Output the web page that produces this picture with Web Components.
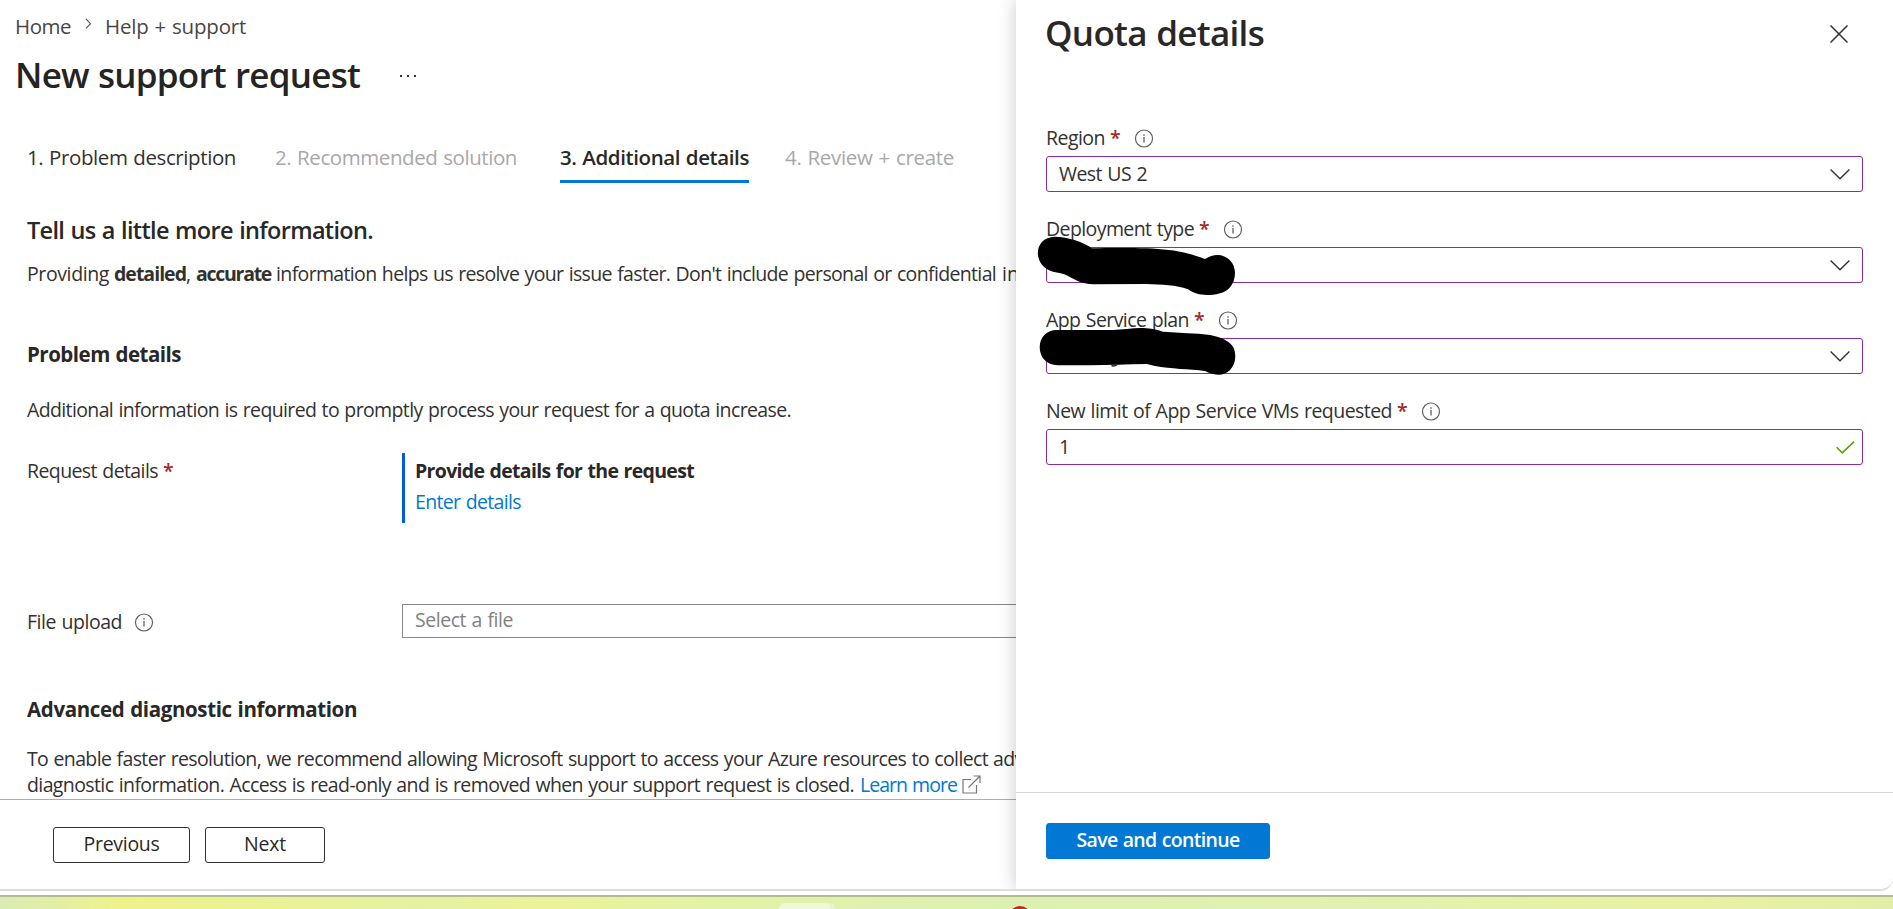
<!DOCTYPE html>
<html lang="en">
<head>
<meta charset="utf-8">
<title>New support request</title>
<style>
  html, body {
    margin: 0;
    height: 909px;
    overflow: hidden;
    background: #fff;
    --text-color: #323130;
    --link-color: #0078d4;
    --field-color: #8a2da5;
  }

  body {
    font-family: "Open Sans", "Noto Sans", sans-serif;
    font-size: 19.5px;
    line-height: 26px;
    word-spacing: 0.9px;
    color: var(--text-color);
  }
</style>
</head>
<body>
<support-app></support-app>

<script>
const define = (name, html, setup) => {
  const template = document.createElement('template');
  template.innerHTML = html;

  customElements.define(name, class extends HTMLElement {
    constructor() {
      super();
      this.attachShadow({mode: 'open'});
      this.shadowRoot.appendChild(template.content.cloneNode(true));
    }

    connectedCallback() {
      if (setup) {
        setup(this, this.shadowRoot);
      }
    }
  });
};

// One line of text, tracked so that it fills the given width.
define('fit-text', `
<style>
  :host { display: inline-block; white-space: nowrap; }
  span { display: inline-block; }
</style>
<span><slot></slot></span>`, (host, root) => {
  const span = root.querySelector('span');
  const width = Number(host.getAttribute('w'));
  const count = host.textContent.length;
  const gap = (width - span.getBoundingClientRect().width) / count;
  host.style.letterSpacing = gap.toFixed(3) + 'px';
});

define('info-icon', `
<style>
  :host { display: block; width: 20px; height: 20px; }
  svg { display: block; }
</style>
<svg width="20" height="20" fill="none" stroke="#605e5c">
  <circle cx="10" cy="9.5" r="8.5" stroke-width="1.2"/>
  <path d="M10 8v5.500M10 5.300v1.500" stroke-width="1.3"/>
</svg>`);

define('bread-crumb', `
<style>
  :host { display: flex; height: 26px; padding: 13px 0 0 15px; color: #484644; font-size: 20.5px; }
  svg { margin: 5px 13px 0 14px; }
</style>
<fit-text w="56">Home</fit-text>
<svg width="7" height="12" fill="none" stroke="#605e5c" stroke-width="1.2"><path d="M1 1l4.500 4.700L1 10.400"/></svg>
<fit-text w="141">Help + support</fit-text>`);

define('page-title', `
<style>
  :host { display: flex; height: 50px; margin-top: 11px; padding-left: 15px; }
  h1 { margin: 0; font-size: 35px; line-height: 50px; font-weight: 600; color: #252423; }
  svg { margin: 24px 0 0 40px; }
</style>
<h1><fit-text w="345">New support request</fit-text></h1>
<svg width="18" height="4" fill="#323130"><path d="M0 1h2v2H0zM7 1h2v2H7zM14 1h2v2h-2z"/></svg>`);

define('step-tab', `
<style>
  :host { display: block; box-sizing: border-box; height: 45px; padding-top: 6px; font-size: 20.5px; color: #323130; }
  :host([disabled]) { color: #a9a8a7; }
  :host([active]) { font-weight: 600; color: #292827; border-bottom: 3px solid #0078d4; }
</style>
<slot></slot>`);

define('step-tabs', `
<style>
  :host { display: flex; margin: 38px 0 0 27px; height: 45px; }
  step-tab[disabled] { margin-left: 39px; }
  step-tab[active] { margin-left: 43px; }
  step-tab[active] + step-tab { margin-left: 36px; }
</style>
<step-tab><fit-text w="209">1. Problem description</fit-text></step-tab>
<step-tab disabled><fit-text w="242">2. Recommended solution</fit-text></step-tab>
<step-tab active><fit-text w="189">3. Additional details</fit-text></step-tab>
<step-tab disabled><fit-text w="169">4. Review + create</fit-text></step-tab>`);

define('form-row', `
<style>
  :host { display: grid; grid-template-columns: 375px 640px; }
  .label { display: flex; }
</style>
<div class="label"><slot name="label"></slot></div>
<slot></slot>`);

define('request-form', `
<style>
  :host { display: block; height: 616px; overflow: hidden; padding-left: 27px; white-space: nowrap; }
  h2, h3, p { margin: 0; color: #292827; }
  h2 { margin-top: 34px; font-size: 23.5px; line-height: 26px; font-weight: 600; }
  h3 { font-size: 20.5px; line-height: 26px; font-weight: 700; }
  p { color: var(--text-color); }
  b { font-weight: 700; }
  a { color: var(--link-color); }
  .intro { display: flex; margin-top: 18px; }
  .star { margin-left: 5px; font-weight: 600; color: #a4262c; }
  .details { border-left: 3px solid #015cda; height: 70px; padding-left: 10px; }
  .details b { display: block; margin-top: 5px; color: #292827; }
  .details a { display: block; margin-top: 5px; }
  .file { box-sizing: border-box; height: 34px; border: 1px solid #8a8886; padding: 2px 12px; line-height: 26px; color: #838180; }
  info-icon { margin: 4px 0 0 12px; }
  svg { display: inline-block; margin-left: 5px; vertical-align: -2px; }
</style>
<h2><fit-text w="346">Tell us a little more information.</fit-text></h2>
<p class="intro">
  <fit-text w="82">Providing</fit-text>
  <b style="margin-left:5px"><fit-text w="72">detailed</fit-text></b>,
  <b style="margin-left:5px"><fit-text w="75">accurate</fit-text></b>
  <fit-text w="720" style="margin-left:5px">information helps us resolve your issue faster. Don't include personal or confidential</fit-text>&nbsp;information
</p>
<h3 style="margin-top:54px"><fit-text w="154">Problem details</fit-text></h3>
<p style="margin-top:30px"><fit-text w="764">Additional information is required to promptly process your request for a quota increase.</fit-text></p>
<form-row style="margin-top:30px">
  <div slot="label" style="padding-top:5px"><fit-text w="131">Request details</fit-text><span class="star">*</span></div>
  <div class="details">
    <b><fit-text w="279">Provide details for the request</fit-text></b>
    <a><fit-text w="106">Enter details</fit-text></a>
  </div>
</form-row>
<form-row style="margin-top:81px">
  <div slot="label" style="display:flex;padding-top:5px"><fit-text w="95">File upload</fit-text><info-icon></info-icon></div>
  <div class="file"><fit-text w="98">Select a file</fit-text></div>
</form-row>
<h3 style="margin-top:58px"><fit-text w="330">Advanced diagnostic information</fit-text></h3>
<p style="margin-top:24px"><fit-text w="961">To enable faster resolution, we recommend allowing Microsoft support to access your Azure resources to collect</fit-text><fit-text w="82" style="margin-left:5px">advanced</fit-text></p>
<p><fit-text w="827">diagnostic information. Access is read-only and is removed when your support request is closed.</fit-text>&nbsp;<a><fit-text w="97">Learn more</fit-text></a><svg width="19" height="19" fill="none" stroke="#797775" stroke-width="1.200"><path d="M9 4.5H1v13.500h13.500v-8M6.500 12.500L17.500 1.500M11.500 1H18V8"/></svg></p>`);

define('ui-button', `
<style>
  :host {
    box-sizing: border-box; display: flex; justify-content: center; height: 36px;
    border: 1px solid #323130; border-radius: 3px; line-height: 32px;
    font-weight: 500; color: #292827; background: #fff;
  }
  :host([primary]) { border-color: #0078d4; background: #0078d4; color: #fff; font-weight: 600; }
</style>
<slot></slot>`);

define('request-page', `
<style>
  :host { display: block; width: 1016px; height: 889px; overflow: hidden; }
  footer { display: flex; height: 89px; gap: 15px; padding: 27px 0 0 53px; border-top: 1px solid #adadad; }
</style>
<bread-crumb></bread-crumb>
<page-title></page-title>
<step-tabs></step-tabs>
<request-form></request-form>
<footer>
  <ui-button style="width:137px"><fit-text w="76">Previous</fit-text></ui-button>
  <ui-button style="width:120px"><fit-text w="42">Next</fit-text></ui-button>
</footer>`);

define('quota-field', `
<style>
  :host { display: flow-root; height: 91px; }
  .label { display: flex; height: 31px; margin-top: -1px; line-height: 26px; }
  .star { margin-left: 5px; width: 10px; font-weight: 600; color: #a4262c; }
  info-icon { margin: 4px 0 0 14px; }
  .box {
    box-sizing: border-box; display: flex; justify-content: space-between; height: 36px;
    border: 1px solid var(--field-color); border-radius: 3px; padding: 4px 12px 0 12px; background: #fff;
  }
  svg { display: none; }
  .arrow { margin-top: 8px; }
  .check { margin: 7px -5px 0 0; }
  :host([kind="select"]) .arrow, :host([kind="valid"]) .check { display: block; }
</style>
<div class="label"><slot name="label"></slot><span class="star">*</span><info-icon></info-icon></div>
<div class="box">
  <slot><span></span></slot>
  <svg class="arrow" width="20" height="11" fill="none" stroke="#323130" stroke-width="1.4"><path d="M.6.6L10 9.800 19.400.6"/></svg>
  <svg class="check" width="19" height="13" fill="none" stroke="#57a300" stroke-width="1.6"><path d="M.6 6.200L6.300 11.800 18 .6"/></svg>
</div>`);

define('quota-panel', `
<style>
  :host {
    box-sizing: border-box; display: flex; flex-direction: column; width: 877px; height: 889px;
    background: #fff; border-radius: 0 0 12px 0; box-shadow: 0 0 18px rgba(0, 0, 0, .22);
  }
  header { display: flex; justify-content: space-between; height: 126px; padding: 0 45px 0 29px; }
  h1 { margin: 8px 0 0; font-size: 35px; line-height: 50px; font-weight: 600; color: #292827; }
  header svg { margin-top: 25px; }
  main { flex: 1; padding: 0 30px; }
  .form { position: relative; display: flow-root; }
  .marks { position: absolute; left: -14px; top: 106px; }
  footer { box-sizing: border-box; height: 97px; border-top: 1px solid #d8d8d8; padding: 30px; }
</style>
<header>
  <h1><fit-text w="219">Quota details</fit-text></h1>
  <svg width="18" height="18" fill="none" stroke="#323130" stroke-width="1.5"><path d="M.5.5l17 17M17.500.5l-17 17"/></svg>
</header>
<main>
  <div class="form">
    <quota-field kind="select"><fit-text slot="label" w="59">Region</fit-text><fit-text w="88">West US 2</fit-text></quota-field>
    <quota-field kind="select"><fit-text slot="label" w="148">Deployment type</fit-text></quota-field>
    <quota-field kind="select"><fit-text slot="label" w="143">App Service plan</fit-text></quota-field>
    <quota-field kind="valid"><fit-text slot="label" w="346">New limit of App Service VMs requested</fit-text><fit-text w="11">1</fit-text></quota-field>
    <svg class="marks" width="210" height="150">
      <path d="M23 4.700C36 5 52 10 59.700 16.300C76 16 100 16 114.700 16.300C130 17 145 18.500 154.700 21.300C162 23 168 25 173 27C188 17 203 27 203 40.700C203 53 195 60 188 61.300C183 63 179 63 174.700 63C168 63 161 61 156 57.300C144 53 130 52.500 114.700 52L61 52.300C51 52 45 49 36 44C31 41 26 41 21 39.700C0 34 1 5 23 4.700Z"/>
      <path d="M24.700 98L81 98C92 97.500 105 95 114.700 96.300C121 96.500 126 98 131 99.700C148 101 163 101 178 103C187 105 193 107 198 111.300C202 115 203.300 119 203.300 124.700C203 136 195 143 186 142.700C181 142.500 177 141 173 139C157 137 139 137 123 134L114.700 132C96 132 77 133.300 58 133.300L26 133.300C14 133 7.700 125 7.700 115.300C7.700 105 15 98 24.700 98Z"/>
      <path d="M79.500 133.500q3 1.200 5.500-.8" fill="none" stroke="#323130" stroke-width="1.500"/>
    </svg>
  </div>
</main>
<footer><ui-button primary style="width:224px"><fit-text w="163">Save and continue</fit-text></ui-button></footer>`);

define('task-bar', `
<style>
  :host {
    display: block; height: 12px; overflow: hidden; border-top: 2px solid #b5bc90;
    background: linear-gradient(90deg, #d9ecb4 0, #e1eea6 50px, #eff28b 120px, #ebf292 220px, #e5f1a0 420px, #ebf399 540px, #e2f2a6 720px, #dcf0b3 1020px, #e2f2ad 1400px, #e9f1a1 1680px, #e2eea8 1893px);
  }
  svg { display: block; }
</style>
<svg width="1893" height="12">
  <rect x="783" y="6" width="53" height="20" rx="6" fill="#eaf5c5"/>
  <rect x="779" y="6" width="52" height="20" rx="6" fill="#f1f8d6"/>
  <circle cx="1020" cy="20" r="11" fill="#c42b1c"/>
</svg>`);

define('support-app', `
<style>
  :host { display: flex; flex-direction: column; width: 1893px; height: 909px; }
  .window { display: flex; height: 889px; overflow: hidden; border-bottom: 2px solid #ddd; border-bottom-right-radius: 13px; }
  quota-panel { position: relative; }
  .gap { height: 4px; }
</style>
<div class="window">
  <request-page></request-page>
  <quota-panel></quota-panel>
</div>
<div class="gap"></div>
<task-bar></task-bar>`);
</script>
</body>
</html>
